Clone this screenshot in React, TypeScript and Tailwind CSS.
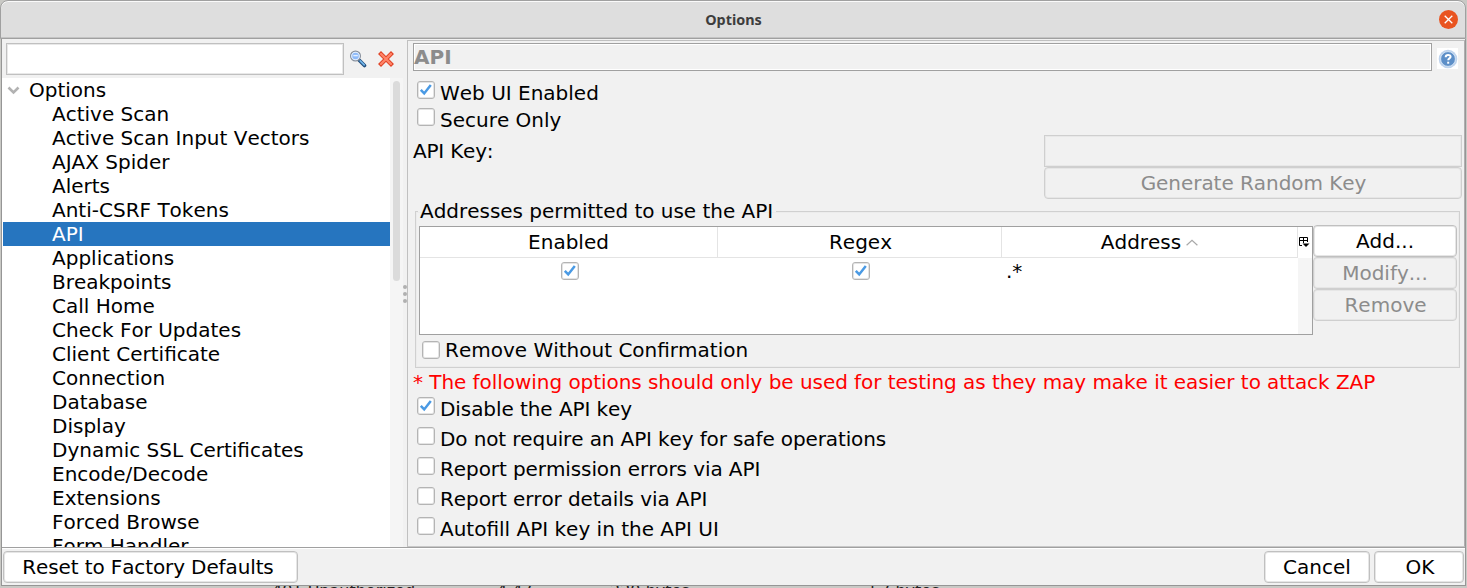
import React from 'react';

const tree = [
  'Active Scan', 'Active Scan Input Vectors', 'AJAX Spider', 'Alerts', 'Anti-CSRF Tokens', 'API',
  'Applications', 'Breakpoints', 'Call Home', 'Check For Updates', 'Client Certificate', 'Connection',
  'Database', 'Display', 'Dynamic SSL Certificates', 'Encode/Decode', 'Extensions', 'Forced Browse', 'Form Handler',
];

function Box({ checked = false }: { checked?: boolean }) {
  return (
    <span className="flex h-[18px] w-[18px] shrink-0 items-center justify-center rounded-[3px] border border-[#b4b4b4] bg-white shadow-[inset_0_0_0_1px_#e4e4e4]">
      {checked && (
        <svg width="14" height="14" viewBox="0 0 14 14" fill="none">
          <path d="M1.8 6.8 5.2 10.4 11.8 2" stroke="#4a9ae4" strokeWidth="2.5" />
        </svg>
      )}
    </span>
  );
}

function Option({ label, checked, className }: { label: string; checked?: boolean; className: string }) {
  return (
    <label className={`flex shrink-0 gap-[5px] pl-1 ${className}`}>
      <Box checked={checked} />
      <span className="mt-[2px] leading-[20px]">{label}</span>
    </label>
  );
}

function Button({ label, disabled = false, className }: { label: string; disabled?: boolean; className: string }) {
  return (
    <button
      className={`flex h-8 shrink-0 items-center justify-center rounded-[4px] border ${
        disabled ? 'border-[#cfcfcf] bg-[#f1f1f1] text-[#8c8c8c]' : 'border-[#c0c0c0] bg-white text-black'
      } shadow-[inset_0_0_0_1px_#e6e6e6] ${className}`}
    >
      {label}
    </button>
  );
}

function TitleBar() {
  return (
    <header className="flex h-[39px] shrink-0 items-center rounded-t-[8px] border border-[#a0a0a0] bg-[#dedede] shadow-[inset_0_1px_0_#fafafa,inset_0_-1px_0_#c4c4c4]">
      <div className="w-[27px]" />
      <h1 className="flex-1 text-center font-['Noto_Sans',sans-serif] text-[14.4px] font-bold text-[#3d3d3d]">Options</h1>
      <button className="mr-[7px] mb-px flex h-[19px] w-[19px] items-center justify-center rounded-full bg-[#e95420]">
        <svg width="9" height="9" viewBox="0 0 9 9" stroke="#fff" strokeWidth="1.3"><path d="m.7.7 7.6 7.6m0-7.6L.7 8.3" /></svg>
      </button>
    </header>
  );
}

function Sidebar() {
  return (
    <aside className="flex w-[401px] shrink-0 flex-col">
      <div className="flex h-[39px] shrink-0 items-center pl-1">
        <input className="h-[32px] w-[338px] border border-[#c0c0c0] bg-white shadow-[inset_0_0_0_1px_#e8e8e8] outline-none" />
        <svg className="ml-[5px]" width="18" height="18" viewBox="0 0 18 18">
          <path d="m10.5 10.5 5 5" stroke="#234f7d" strokeWidth="3.6" strokeLinecap="round" />
          <path d="m11.2 10.8 4 4" stroke="#72b6eb" strokeWidth="1.7" strokeLinecap="round" />
          <circle cx="6.5" cy="6" r="4.9" fill="#a9cffc" stroke="#888f9a" strokeWidth="1.2" />
          <circle cx="6.5" cy="6" r="3.8" fill="#8dbafa" stroke="#e5eefb" strokeWidth="1.1" />
          <path d="M4.3 5.6h4.5" stroke="#e4f0ff" strokeWidth="1.4" />
        </svg>
        <svg className="ml-[11px]" width="16" height="16" viewBox="0 0 16 16">
          <path d="m3 3 10 10m0-10L3 13" stroke="#e04326" strokeWidth="4.2" strokeLinecap="square" />
          <path d="m3 3 10 10m0-10L3 13" stroke="#ff8468" strokeWidth="2.3" strokeLinecap="round" />
        </svg>
      </div>
      <div className="flex min-h-0 flex-1">
        <ul className="w-[388px] overflow-hidden bg-white pl-px">
          <li className="flex h-6 items-center pl-[4px]">
            <svg width="13" height="9" viewBox="0 0 13 9"><path d="m1.5 1.5 5 5 5-5" fill="none" stroke="#b2b2b2" strokeWidth="2.6" /></svg>
            <span className="ml-[9px]">Options</span>
          </li>
          {tree.map((name) => (
            <li key={name} className={`flex h-6 items-center whitespace-nowrap pl-[49px] ${name === 'API' ? 'bg-[#2675bf] text-white' : ''}`}>{name}</li>
          ))}
        </ul>
        <div className="flex flex-1 justify-center bg-[#f5f5f5] pt-[3px]">
          <div className="h-[200px] w-[7px] rounded-full bg-[#dbdbdb]" />
        </div>
      </div>
    </aside>
  );
}

function AddressTable() {
  const th = 'flex h-full items-center justify-center border-r border-[#e4e4e4]';
  return (
    <div className="flex h-[109px] w-[894px] flex-col border border-[#a0a0a0] bg-white">
      <div className="flex h-[31px] shrink-0">
        <div className="flex flex-1 border-b border-[#e4e4e4]">
          <div className={`w-[298px] ${th}`}>Enabled</div>
          <div className={`w-[284px] pl-[2px] ${th}`}>Regex</div>
          <div className={`flex-1 ${th}`}>
            Address
            <svg className="ml-[5px]" width="12" height="7" viewBox="0 0 12 7"><path d="m.6 6.2 5.4-5 5.4 5" fill="none" stroke="#a8a8a8" strokeWidth="1.2" /></svg>
          </div>
        </div>
        <div className="flex w-[14px] items-center pl-px">
          <svg width="11" height="11" viewBox="0 0 11 11" fill="none" stroke="#000">
            <path d="M3 8.5H.5v-8h8V5M0 3.5h9M4.5 0v6" /><path d="M3.5 6.5h7L7 10Z" fill="#000" stroke="none" />
          </svg>
        </div>
      </div>
      <div className="flex min-h-0 flex-1">
        <div className="flex w-[298px] justify-center pt-1 pl-[1px]"><Box checked /></div>
        <div className="flex w-[284px] justify-center pt-1 pl-[1px]"><Box checked /></div>
        <div className="flex-1 pl-[4px] leading-[27px]">.*</div>
        <div className="w-[14px] bg-[#f5f5f5]" />
      </div>
    </div>
  );
}

function ApiPanel() {
  return (
    <main className="mt-px flex w-[1058px] shrink-0 flex-col border border-t-[#c0c0c0] border-r-[#b0b0b0] border-b-[#c8c8c8] border-l-[#c0c0c0] pl-[5px]">
      <div className="mt-[2px] flex h-[29px] shrink-0 items-start">
        <h2 className="flex h-[28px] w-[1019px] items-center border border-[#a0a0a0] bg-[#f1f1f1] font-bold text-[#8c8c8c] shadow-[inset_1px_1px_0_#fff,inset_-1px_-1px_0_#fff]">API</h2>
        <div className="mt-[5px] ml-[5px] flex h-[21px] w-[21px] items-center justify-center bg-white">
          <svg width="20" height="20" viewBox="0 0 20 20">
            <circle cx="10" cy="10" r="9.3" fill="#bed3ed" />
            <circle cx="10" cy="10" r="7.4" fill="#5d8fc8" stroke="#e2edf9" strokeWidth=".8" />
            <path d="M7.7 8.2c0-3 4.9-2.9 4.9-.4 0 1.7-2.4 1.6-2.4 3.5" fill="none" stroke="#fff" strokeWidth="2" /><path d="M9.2 12.7h2v2h-2z" fill="#fff" />
          </svg>
        </div>
      </div>
      <Option label="Web UI Enabled" checked className="mt-[9px] h-[27px]" />
      <Option label="Secure Only" className="h-[27px]" />
      <div className="flex h-8 shrink-0 justify-between">
        <span className="leading-[32px] tracking-[-0.2px]">API Key:</span>
        <input disabled className="mr-[2px] h-8 w-[418px] border border-[#cfcfcf] bg-[#f1f1f1] shadow-[inset_0_0_0_1px_#e8e8e8]" />
      </div>
      <Button label="Generate Random Key" disabled className="mr-[2px] w-[418px] self-end pl-px tracking-[-0.05px]" />
      <fieldset className="ml-[2px] mt-px flex h-[168px] w-[1045px] shrink-0 flex-col border border-[#d0d0d0] shadow-[inset_0_0_0_1px_#ececec]">
        <legend className="ml-[2px] h-[22px] pl-[2px] pr-[3px] leading-[22px] tracking-[-0.02px]">Addresses permitted to use the API</legend>
        <div className="mt-1 flex pl-[3px]">
          <AddressTable />
          <div className="-mt-px flex flex-col">
            <Button label="Add..." className="w-[144px]" />
            <Button label="Modify..." disabled className="w-[144px]" />
            <Button label="Remove" disabled className="w-[144px] pl-px" />
          </div>
        </div>
        <label className="flex h-[30px] items-center gap-[5px] pl-[6px]"><Box />Remove Without Confirmation</label>
      </fieldset>
      <p className="flex h-[29px] shrink-0 items-center whitespace-nowrap pb-px tracking-[-0.05px] text-[#ff0000]">* The following options should only be used for testing as they may make it easier to attack ZAP</p>
      <Option label="Disable the API key" checked className="h-[30px] tracking-[-0.07px]" />
      <Option label="Do not require an API key for safe operations" className="h-[30px] tracking-[-0.12px]" />
      <Option label="Report permission errors via API" className="h-[30px] tracking-[-0.09px]" />
      <Option label="Report error details via API" className="h-[30px] tracking-[-0.09px]" />
      <Option label="Autofill API key in the API UI" className="h-[20px]" />
    </main>
  );
}

export default function App() {
  return (
    <div className="h-[588px] w-[1467px] overflow-hidden bg-[#c9c9c5] font-['DejaVu_Sans',sans-serif] text-[20px] leading-6 text-black [font-kerning:none]">
      <div className="flex h-[586px] w-[1466px] flex-col">
        <TitleBar />
        <div className="ml-px flex h-[547px] flex-col border-x border-b border-[#969696] bg-[#f1f1f1]">
          <div className="flex h-[509px] shrink-0 border-b border-[#a0a0a0]">
            <Sidebar />
            <div className="flex w-[4px] shrink-0 flex-col items-center justify-center gap-[3px] pt-px">
              <i className="h-1 w-1 rounded-full bg-[#b0b0b0]" /><i className="h-1 w-1 rounded-full bg-[#b0b0b0]" /><i className="h-1 w-1 rounded-full bg-[#b0b0b0]" />
            </div>
            <ApiPanel />
          </div>
          <footer className="flex flex-1 items-start gap-[4px] border-t border-white pl-px pr-px pt-[2px]">
            <Button label="Reset to Factory Defaults" className="mr-auto w-[295px] pr-[5px] tracking-[-0.12px]" />
            <Button label="Cancel" className="w-[106px]" />
            <Button label="OK" className="w-[90px] pl-[2px]" />
          </footer>
        </div>
      </div>
      <div className="flex h-[2px] overflow-hidden whitespace-nowrap pl-[272px] text-[16px] leading-[10px] text-[#222]">
        <span className="w-[225px]">401 Unauthorized</span>
        <span className="w-[113px]">4.47</span>
        <span className="w-[260px]">220 bytes</span>
        <span>57 bytes</span>
      </div>
    </div>
  );
}
